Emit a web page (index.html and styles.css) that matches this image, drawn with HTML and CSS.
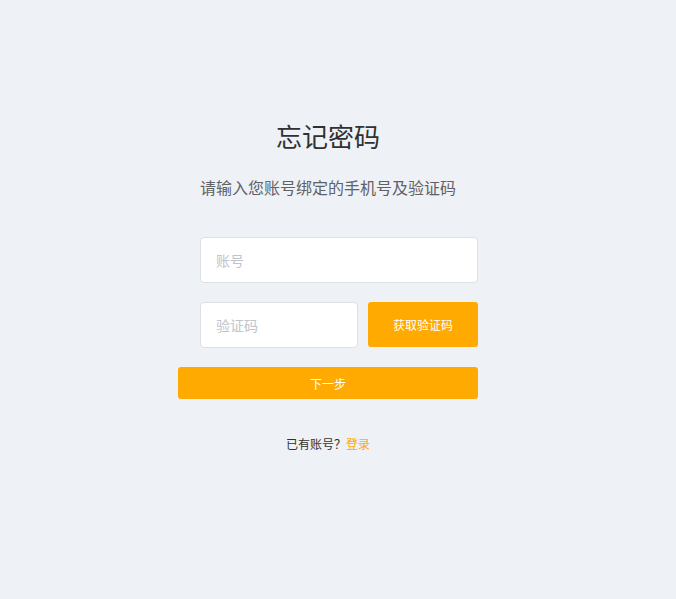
FILE: index.html
```html
<!DOCTYPE html>
<html lang="zh-CN">
<head>
<meta charset="utf-8">
<title>忘记密码</title>
<link rel="stylesheet" href="styles.css">
</head>
<body>
<div class="page">
  <div class="panel">
    <h1 class="title">忘记密码</h1>
    <p class="subtitle">请输入您账号绑定的手机号及验证码</p>
    <form class="form">
      <div class="field">
        <input class="input" type="text" placeholder="账号">
      </div>
      <div class="field code-row">
        <input class="input code-input" type="text" placeholder="验证码">
        <button type="button" class="btn btn-code">获取验证码</button>
      </div>
      <button type="button" class="btn btn-next">下一步</button>
    </form>
    <p class="footer">已有账号？<a class="link" href="#">登录</a></p>
  </div>
</div>
</body>
</html>
```
FILE: styles.css
```css
html, body {
  margin: 0;
  padding: 0;
  height: 100%;
  background: #eef1f6;
  font-family: "Noto Sans CJK SC", "Noto Sans", sans-serif;
}
.page {
  display: flex;
  justify-content: center;
  padding: 118px 20px 0 0;
}
.panel {
  width: 300px;
  display: flex;
  flex-direction: column;
  align-items: center;
}
.title {
  margin: 0;
  font-size: 26px;
  line-height: 36px;
  font-weight: 400;
  color: #303133;
}
.subtitle {
  margin: 21px 0 0;
  font-size: 16px;
  line-height: 24px;
  color: #606266;
}
.form {
  margin-top: 38px;
  width: 300px;
  display: flex;
  flex-direction: column;
}
.field {
  margin-left: 22px;
  display: flex;
}
.code-row {
  margin-top: 19px;
  gap: 10px;
  align-items: flex-start;
}
.input {
  box-sizing: border-box;
  width: 100%;
  height: 46px;
  border: 1px solid #dcdfe6;
  border-radius: 4px;
  background: #fff;
  padding: 0 15px;
  font-family: inherit;
  font-size: 14px;
  color: #606266;
  outline: none;
}
.input::placeholder {
  color: #c0c4cc;
}
.code-input {
  width: 158px;
  flex: none;
}
.btn {
  box-sizing: border-box;
  border: none;
  border-radius: 3px;
  background: #ffaa00;
  color: #fff;
  font-family: inherit;
  font-size: 12px;
  cursor: pointer;
  padding: 0;
}
.btn-code {
  width: 110px;
  height: 45px;
  flex: none;
}
.btn-next {
  margin-top: 19px;
  width: 300px;
  height: 32px;
}
.footer {
  margin: 35px 0 0;
  font-size: 12px;
  line-height: 20px;
  color: #303133;
}
.link {
  color: #ffaa00;
  text-decoration: none;
}
```
